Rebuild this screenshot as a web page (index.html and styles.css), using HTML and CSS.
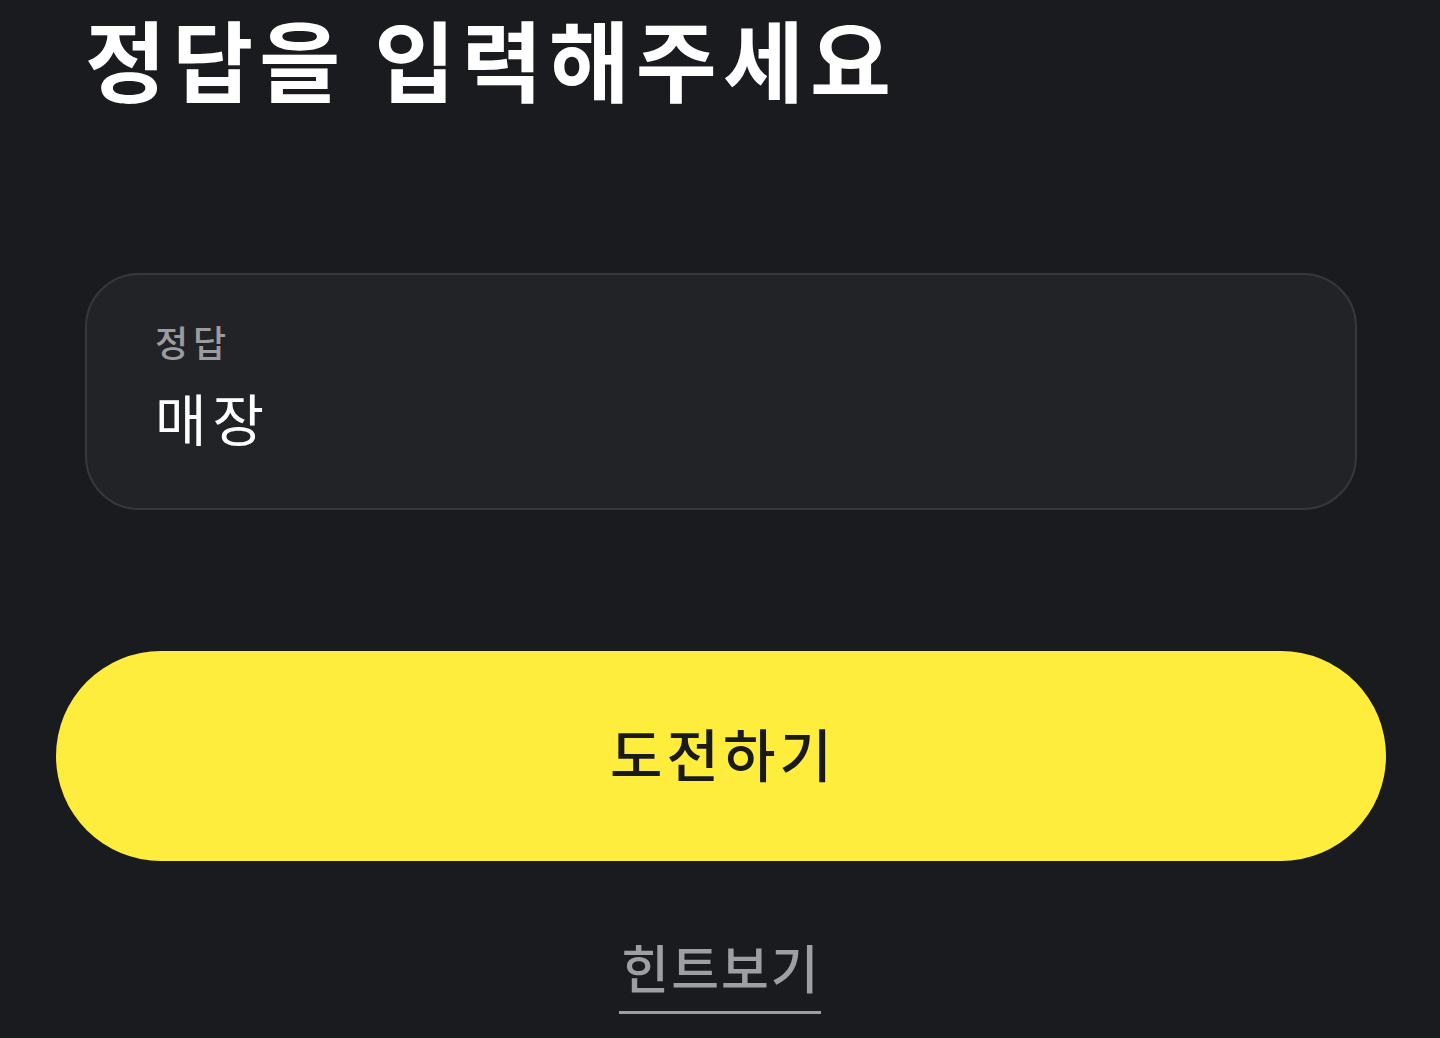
FILE: index.html
```html
<!DOCTYPE html>
<html lang="ko">
<head>
<meta charset="utf-8">
<title>정답을 입력해주세요</title>
<link rel="stylesheet" href="styles.css">
</head>
<body>
<main class="page">
  <h1 class="title">정답을 입력해주세요</h1>
  <div class="field">
    <span class="field-label">정답</span>
    <span class="field-value">매장</span>
  </div>
  <button class="cta" type="button">도전하기</button>
  <div class="hint-row"><a class="hint" href="#">힌트보기</a></div>
</main>
</body>
</html>
```

FILE: styles.css
```css
html, body {
  margin: 0;
  padding: 0;
  background: #1a1b1e;
}
body {
  font-family: "Noto Sans CJK KR", "Noto Sans", sans-serif;
  width: 1440px;
  height: 1038px;
  overflow: hidden;
}
.page {
  display: flex;
  flex-direction: column;
}
.title {
  margin: 4px 0 0 85px;
  font-size: 88px;
  line-height: 106px;
  font-weight: 700;
  color: #ffffff;
  letter-spacing: 6.2px;
  word-spacing: -3px;
  white-space: nowrap;
}
.field {
  margin: 163px 83px 0 85px;
  box-sizing: content-box;
  border: 2px solid #37383c;
  border-radius: 54px;
  background: #222327;
  display: flex;
  flex-direction: column;
  padding: 48px 68px 0 68px;
  height: 185px;
}
.field-label {
  font-size: 36px;
  line-height: 1;
  color: #9b9ba0;
  font-weight: 500;
  letter-spacing: 5px;
}
.field-value {
  margin-top: 30px;
  font-size: 56px;
  line-height: 1;
  color: #ffffff;
  font-weight: 400;
  letter-spacing: 6px;
}
.cta {
  margin: 141px 54px 0 56px;
  height: 210px;
  border: none;
  border-radius: 105px;
  background: #ffed3e;
  color: #1a1a1a;
  font-family: inherit;
  font-size: 57px;
  font-weight: 500;
  line-height: 1;
  padding: 0 0 7px 4px;
  letter-spacing: 4px;
}
.hint-row {
  display: flex;
  justify-content: center;
  margin-top: 80px;
}
.hint {
  display: inline-block;
  font-size: 52px;
  line-height: 1;
  font-weight: 500;
  color: #9e9ea3;
  text-decoration: none;
  padding: 0 0 18px 2px;
  letter-spacing: 2px;
  border-bottom: 3px solid #9e9ea3;
}
```
